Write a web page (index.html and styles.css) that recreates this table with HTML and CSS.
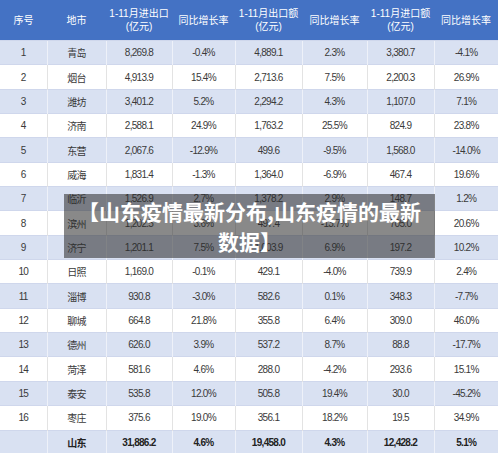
FILE: index.html
```html
<!DOCTYPE html>
<html lang="zh">
<head>
<meta charset="utf-8">
<link rel="stylesheet" href="styles.css">
</head>
<body>
<div class="wrap">
<table class="grid">
<colgroup>
<col class="c1"><col class="c2"><col class="c3"><col class="c4"><col class="c5"><col class="c6"><col class="c7"><col class="c8">
</colgroup>
<thead>
<tr><th>序号</th><th>地市</th><th>1-11月进出口<br>(亿元)</th><th>同比增长率</th><th>1-11月出口额<br>(亿元)</th><th>同比增长率</th><th>1-11月进口额<br>(亿元)</th><th>同比增长率</th></tr>
</thead>
<tbody>
<tr><td>1</td><td>青岛</td><td>8,269.8</td><td>-0.4%</td><td>4,889.1</td><td>2.3%</td><td>3,380.7</td><td>-4.1%</td></tr>
<tr><td>2</td><td>烟台</td><td>4,913.9</td><td>15.4%</td><td>2,713.6</td><td>7.5%</td><td>2,200.3</td><td>26.9%</td></tr>
<tr><td>3</td><td>潍坊</td><td>3,401.2</td><td>5.2%</td><td>2,294.2</td><td>4.3%</td><td>1,107.0</td><td>7.1%</td></tr>
<tr><td>4</td><td>济南</td><td>2,588.1</td><td>24.9%</td><td>1,763.2</td><td>25.5%</td><td>824.9</td><td>23.8%</td></tr>
<tr><td>5</td><td>东营</td><td>2,067.6</td><td>-12.9%</td><td>499.6</td><td>-9.5%</td><td>1,568.0</td><td>-14.0%</td></tr>
<tr><td>6</td><td>威海</td><td>1,831.4</td><td>-1.3%</td><td>1,364.0</td><td>-6.9%</td><td>467.4</td><td>19.6%</td></tr>
<tr><td>7</td><td>临沂</td><td>1,526.9</td><td>2.7%</td><td>1,378.2</td><td>2.9%</td><td>148.7</td><td>1.2%</td></tr>
<tr><td>8</td><td>滨州</td><td>1,202.5</td><td>3.6%</td><td>497.4</td><td>-13.7%</td><td>705.0</td><td>20.6%</td></tr>
<tr><td>9</td><td>济宁</td><td>1,201.1</td><td>7.5%</td><td>1,003.9</td><td>6.9%</td><td>197.2</td><td>10.2%</td></tr>
<tr><td>10</td><td>日照</td><td>1,169.0</td><td>-0.1%</td><td>429.1</td><td>-4.0%</td><td>739.9</td><td>2.4%</td></tr>
<tr><td>11</td><td>淄博</td><td>930.8</td><td>-3.0%</td><td>582.6</td><td>0.1%</td><td>348.3</td><td>-7.7%</td></tr>
<tr><td>12</td><td>聊城</td><td>664.8</td><td>21.8%</td><td>355.8</td><td>6.4%</td><td>309.0</td><td>46.0%</td></tr>
<tr><td>13</td><td>德州</td><td>626.0</td><td>3.9%</td><td>537.2</td><td>8.7%</td><td>88.8</td><td>-17.7%</td></tr>
<tr><td>14</td><td>菏泽</td><td>581.6</td><td>4.6%</td><td>288.0</td><td>-4.2%</td><td>293.6</td><td>15.1%</td></tr>
<tr><td>15</td><td>泰安</td><td>535.8</td><td>12.0%</td><td>505.8</td><td>19.4%</td><td>30.0</td><td>-45.2%</td></tr>
<tr><td>16</td><td>枣庄</td><td>375.6</td><td>19.0%</td><td>356.1</td><td>18.2%</td><td>19.5</td><td>34.9%</td></tr>
<tr class="total"><td></td><td>山东</td><td>31,886.2</td><td>4.6%</td><td>19,458.0</td><td>4.3%</td><td>12,428.2</td><td>5.1%</td></tr>
</tbody>
</table>
<div class="caption">【山东疫情最新分布,山东疫情的最新数据】</div>
</div>
</body>
</html>
```

FILE: styles.css
```css
html, body {
  margin: 0;
  padding: 0;
  background: #ffffff;
}
.wrap {
  position: relative;
  width: 498px;
}
.grid {
  width: 498px;
  table-layout: fixed;
  border-collapse: collapse;
  font-family: "Liberation Sans", "Noto Sans CJK SC", sans-serif;
  font-size: 10px;
  color: #3a3a3a;
}
.c1 { width: 47px; }
.c2 { width: 59px; }
.c3 { width: 66px; }
.c4 { width: 63px; }
.c5 { width: 67px; }
.c6 { width: 65px; }
.c7 { width: 67px; }
.c8 { width: 64px; }
.grid th {
  height: 40px;
  padding: 0;
  background: #4472c4;
  color: #ffffff;
  font-weight: normal;
  line-height: 13px;
  text-align: center;
  vertical-align: middle;
}
.grid td {
  height: 23.35px;
  padding: 0;
  text-align: center;
  vertical-align: middle;
  letter-spacing: -0.7px;
  border-left: 1px solid #e3e3e3;
  border-top: 1px solid #cfd7ec;
}
.grid td:first-child {
  border-left: none;
}
.grid tbody tr:nth-child(odd) td {
  background: #d9e1f2;
  border-left-color: #eef1f9;
}
.grid .total td {
  font-weight: bold;
  color: #222222;
}
.caption {
  position: absolute;
  left: 64px;
  top: 194px;
  width: 351px;
  padding: 2px 10px;
  background: rgba(40, 40, 40, 0.55);
  color: #ffffff;
  font-family: "Noto Sans CJK SC", sans-serif;
  font-weight: bold;
  font-size: 21px;
  line-height: 30px;
  text-align: center;
}
```
